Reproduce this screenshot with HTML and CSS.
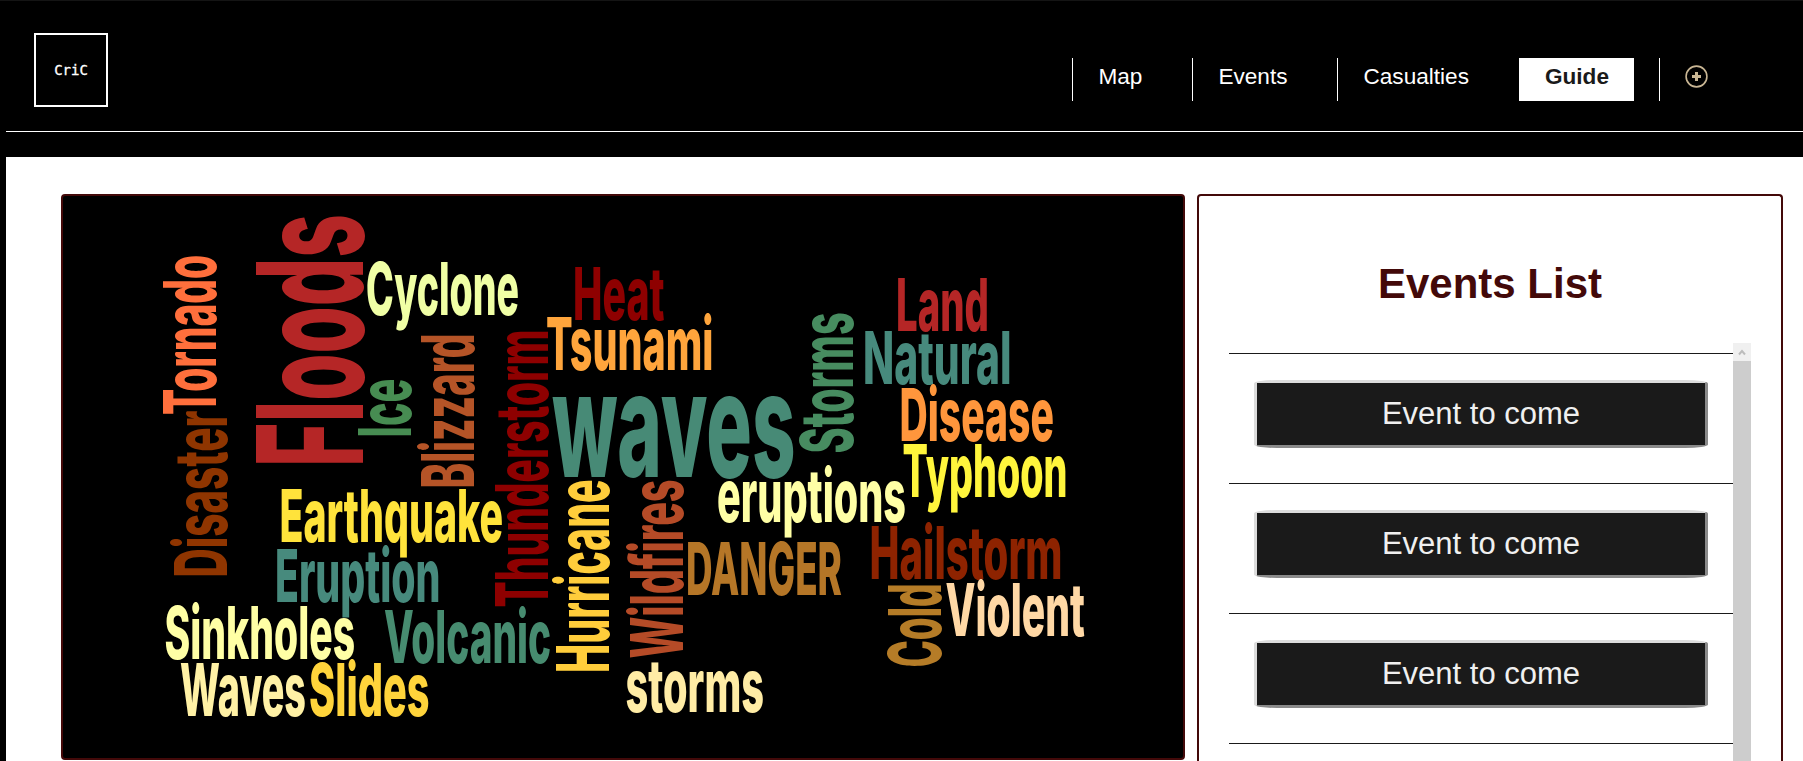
FILE: index.html
```html
<!DOCTYPE html>
<html lang="en">
<head>
<meta charset="utf-8">
<title>CriC</title>
<link rel="stylesheet" href="styles.css">
</head>
<body>
<header class="header">
  <div class="logo">CriC</div>
  <nav class="nav">
    <a class="nav-item">Map</a>
    <a class="nav-item">Events</a>
    <a class="nav-item">Casualties</a>
    <a class="nav-item active">Guide</a>
    <a class="nav-item"><svg class="plus" viewBox="0 0 23 23"><circle cx="11.5" cy="11.5" r="10.4"/><path d="M11.5 7v9M7 11.5h9"/></svg></a>
  </nav>
</header>
<main class="main">
  <section class="cloud">
    <svg class="words" viewBox="63 196 1120 562">
      <text transform="translate(215.7 415) rotate(-90)" textLength="160" lengthAdjust="spacingAndGlyphs" fill="#ff6f3c">Tornado</text>
      <text class="big" transform="translate(363 467) rotate(-90)" textLength="253" lengthAdjust="spacingAndGlyphs" fill="#b52626">Floods</text>
      <text transform="translate(227.3 577.5) rotate(-90)" textLength="167" lengthAdjust="spacingAndGlyphs" fill="#8f3500">Disaster</text>
      <text x="366" y="315.3" textLength="153" lengthAdjust="spacingAndGlyphs" fill="#f0ffa5">Cyclone</text>
      <text transform="translate(410.7 437.5) rotate(-90)" textLength="59" lengthAdjust="spacingAndGlyphs" fill="#478c52">Ice</text>
      <text transform="translate(474.3 488.5) rotate(-90)" textLength="155" lengthAdjust="spacingAndGlyphs" fill="#b55427">Blizzard</text>
      <text transform="translate(548.3 607.5) rotate(-90)" textLength="278" lengthAdjust="spacingAndGlyphs" fill="#8e0000">Thunderstorm</text>
      <text x="279.5" y="541.7" textLength="223.5" lengthAdjust="spacingAndGlyphs" fill="#ffe33b">Earthquake</text>
      <text x="275" y="602.3" textLength="165.5" lengthAdjust="spacingAndGlyphs" fill="#478a7d">Eruption</text>
      <text x="164.5" y="659.3" textLength="190.5" lengthAdjust="spacingAndGlyphs" fill="#ffffa5">Sinkholes</text>
      <text x="180" y="716.3" textLength="126" lengthAdjust="spacingAndGlyphs" fill="#fff1a5">Waves</text>
      <text x="309" y="716.3" textLength="120.5" lengthAdjust="spacingAndGlyphs" fill="#ffd43b">Slides</text>
      <text x="384" y="663" textLength="167" lengthAdjust="spacingAndGlyphs" fill="#478c70">Volcanic</text>
      <text x="573" y="320" textLength="91.5" lengthAdjust="spacingAndGlyphs" fill="#8e0000">Heat</text>
      <text x="546" y="369.7" textLength="167.5" lengthAdjust="spacingAndGlyphs" fill="#ffa53c">Tsunami</text>
      <text class="big" x="552" y="477.3" textLength="243.5" lengthAdjust="spacingAndGlyphs" fill="#478a76">waves</text>
      <text transform="translate(852.7 453.5) rotate(-90)" textLength="141" lengthAdjust="spacingAndGlyphs" fill="#478c60">Storms</text>
      <text x="896" y="331" textLength="93" lengthAdjust="spacingAndGlyphs" fill="#b52626">Land</text>
      <text x="863" y="383.7" textLength="148.5" lengthAdjust="spacingAndGlyphs" fill="#478a7d">Natural</text>
      <text x="899.5" y="440.7" textLength="154.5" lengthAdjust="spacingAndGlyphs" fill="#ff963c">Disease</text>
      <text x="902.5" y="496.7" textLength="165" lengthAdjust="spacingAndGlyphs" fill="#fff53c">Typhoon</text>
      <text x="717" y="522" textLength="189" lengthAdjust="spacingAndGlyphs" fill="#ffffa5">eruptions</text>
      <text x="686" y="595" textLength="156" lengthAdjust="spacingAndGlyphs" fill="#b57627">DANGER</text>
      <text x="869.5" y="578.7" textLength="193" lengthAdjust="spacingAndGlyphs" fill="#8e2300">Hailstorm</text>
      <text transform="translate(941.2 667.5) rotate(-90)" textLength="84" lengthAdjust="spacingAndGlyphs" fill="#b57c27">Cold</text>
      <text x="945.5" y="636" textLength="139.5" lengthAdjust="spacingAndGlyphs" fill="#ffd8a5">Violent</text>
      <text x="625.5" y="711.7" textLength="138.5" lengthAdjust="spacingAndGlyphs" fill="#ffeca5">storms</text>
      <text transform="translate(608.6 673) rotate(-90)" textLength="193.5" lengthAdjust="spacingAndGlyphs" fill="#ffcd3b">Hurricane</text>
      <text transform="translate(682.8 658.5) rotate(-90)" textLength="179" lengthAdjust="spacingAndGlyphs" fill="#b54b27">Wildfires</text>
    </svg>
  </section>
  <aside class="events">
    <h1 class="title">Events List</h1>
    <div class="scroller">
      <ul class="list">
        <li class="row"><button class="event">Event to come</button></li>
        <li class="row"><button class="event">Event to come</button></li>
        <li class="row"><button class="event">Event to come</button></li>
        <li class="row last"></li>
      </ul>
      <div class="track">
        <div class="arrow"><svg class="chevron" viewBox="0 0 8 7"><path d="M1 5.5 4 2l3 3.5"/></svg></div>
      </div>
    </div>
  </aside>
</main>
</body>
</html>
```
FILE: styles.css
```css
* { box-sizing: border-box; }
html { background: #000; }
body {
  margin: 0;
  height: 761px;
  padding-left: 6px;
  overflow: hidden;
  border-top: 1px solid #141414;
  font-family: "Liberation Sans", Arial, sans-serif;
}
.header {
  display: flex;
  justify-content: space-between;
  align-items: flex-start;
  height: 131px;
  margin-bottom: 25px;
  padding: 32px 69px 0 28px;
  border-bottom: 1px solid #fff;
}
.logo {
  display: flex;
  align-items: center;
  justify-content: center;
  width: 74px;
  height: 74px;
  border: 2px solid #fff;
  color: #fff;
  font: 14px "DejaVu Sans Mono", monospace;
  -webkit-text-stroke: 0.3px #fff;
}
.nav {
  display: flex;
  gap: 25px;
  margin-top: 25px;
}
.nav-item {
  height: 43px;
  padding: 6px 25px 0;
  border-left: 1px solid #fff;
  color: #fff;
  font-size: 22.6px;
  line-height: 26px;
}
.nav-item:last-child { padding-right: 26px; }
.nav-item.active {
  background: #fff;
  color: #1a1a1a;
  font-weight: bold;
}
.plus {
  display: block;
  width: 23px;
  height: 23px;
  margin-top: 1px;
  fill: none;
  stroke: #c9b694;
  stroke-width: 1.6;
}
.plus path { stroke-width: 3; }
.main {
  display: flex;
  gap: 12px;
  height: 604px;
  padding: 37px 20px 0 55px;
  background: #fff;
}
.cloud {
  flex: none;
  width: 1124px;
  height: 566px;
  border: 2px solid #430909;
  border-radius: 4px;
  background: #000;
}
.words {
  display: block;
  width: 1120px;
  height: 562px;
  font-family: Inter, sans-serif;
  font-size: 73.3px;
  font-weight: 800;
}
.big { font-size: 146.6px; }
.events {
  flex: 1;
  height: 567px;
  padding: 0 30px;
  border: 2px solid #430909;
  border-bottom: 0;
  border-radius: 4px 4px 0 0;
}
.title {
  margin: 64px 0 35px;
  color: #430909;
  font-size: 42px;
  line-height: 48px;
  text-align: center;
}
.scroller {
  display: flex;
  height: 418px;
}
.list {
  flex: 1;
  margin: 0;
  padding: 10px 0 0;
  list-style: none;
}
.row {
  height: 130px;
  padding: 26px 25px 0;
  border-top: 1px solid #1a1a1a;
}
.row.last {
  height: 18px;
  padding: 0;
}
.event {
  display: block;
  width: 100%;
  height: 68px;
  padding: 0;
  border: 3px solid;
  border-color: #dcdcdc #8a8a8a #8a8a8a #dcdcdc;
  border-radius: 5%;
  background: #1a1a1a;
  color: #f0f0f0;
  font: 31px "Liberation Sans", Arial, sans-serif;
}
.track {
  width: 18px;
  background: #cdcdcd;
}
.arrow {
  display: flex;
  align-items: center;
  justify-content: center;
  height: 18px;
  background: #f0f0f0;
}
.chevron {
  width: 8px;
  height: 7px;
  fill: none;
  stroke: #bcbcbc;
  stroke-width: 2;
}
```
